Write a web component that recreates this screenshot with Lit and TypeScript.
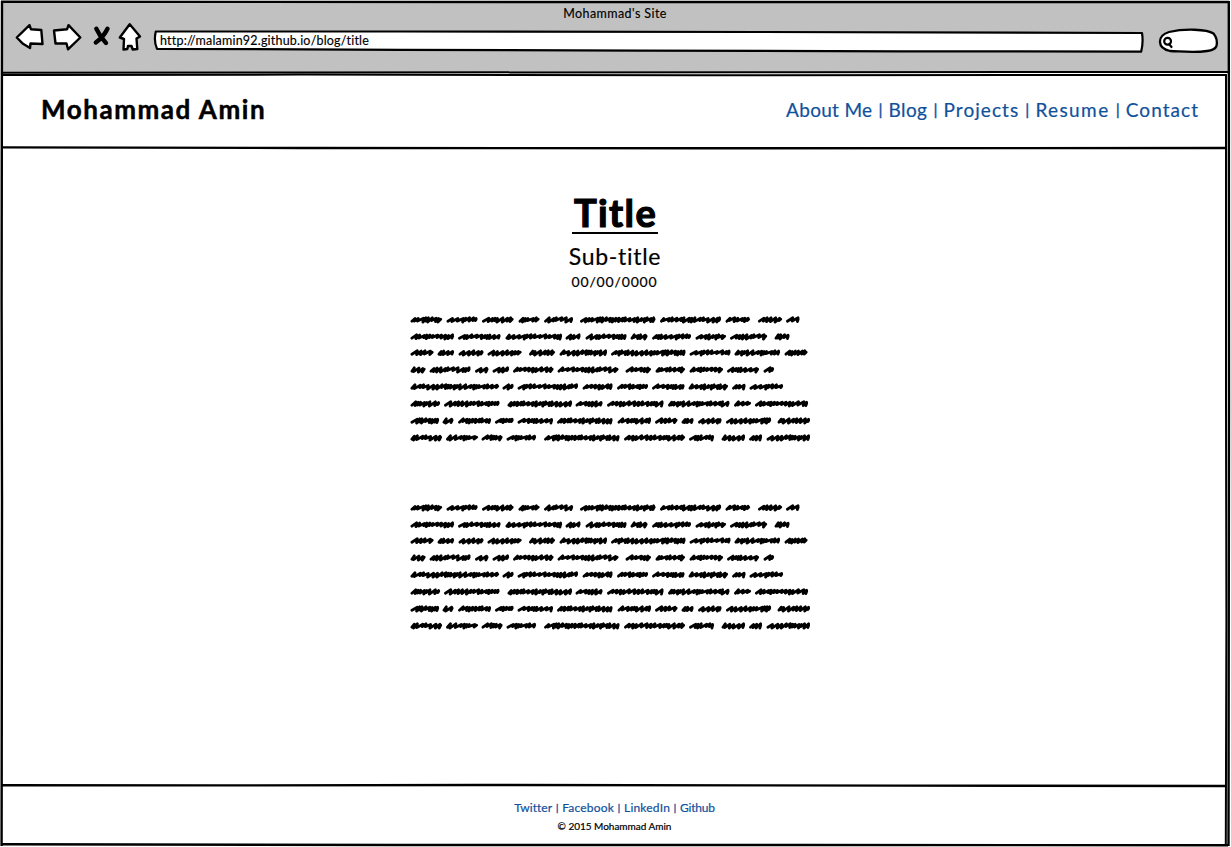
import { LitElement, html, css, svg } from "lit";
import { customElement, property } from "lit/decorators.js";

type Word = [number, number];

// Start and end of every scribbled word on each line, in pixels from the left edge.
const LINES: { y: number; words: Word[] }[] = [
  { y: 10, words: [[0.5, 32], [36.5, 67.5], [72, 103.5], [108.5, 129.5], [134, 163], [170, 245.5], [250, 311], [315.5, 340], [348, 372], [376, 389.5]] },
  { y: 27, words: [[0.5, 44], [48, 90.5], [95.5, 152], [155.5, 170.5], [175.5, 216.5], [220.5, 237.5], [242, 281], [285.5, 316], [320, 357], [364.5, 379.5]] },
  { y: 43, words: [[0.5, 23.5], [27.5, 44], [48.5, 73.5], [77.5, 111.5], [119, 145], [149.5, 197], [201, 275.5], [279.5, 320.5], [324.5, 370], [374.5, 397.5]] },
  { y: 60, words: [[0.5, 15.5], [19.5, 60.5], [65, 78.5], [82.5, 99], [103, 143.5], [147.5, 208.5], [215.5, 241], [245.5, 275], [279.5, 313], [317, 349], [353.5, 364]] },
  { y: 77, words: [[0.5, 89], [92.5, 103.5], [107.5, 168], [172.5, 202.5], [207, 238], [242, 274.5], [278.5, 318], [322, 335.5], [339.5, 373]] },
  { y: 94, words: [[0.5, 30], [34, 89.5], [97.5, 162], [165.5, 192.5], [197, 253.5], [258, 319.5], [324, 341], [345, 398]] },
  { y: 111, words: [[0.5, 29], [32.5, 43.5], [48, 81], [85, 103.5], [107.5, 143], [147, 202.5], [207.5, 241], [245, 267.5], [271.5, 283.5], [288, 311.5], [316, 361], [367.5, 400]] },
  { y: 128, words: [[0.5, 32], [36, 68], [71.5, 92.5], [96.5, 126], [134, 209.5], [214, 275], [279, 304], [311.5, 335], [339, 352], [356.5, 400]] },
];

// A pen stroke that rocks back and forth between two heights, with uneven steps.
function scribble(a: number, b: number, y: number, seed: number): string {
  let x = a + 1.4;
  let s = seed;
  let d = `M${x} ${y + 1.2}`;
  while (x < b - 3.5) {
    s = (s * 37 + 11) % 101;
    const step = 2.4 + (s % 5) * 0.75;
    const nx = Math.min(x + step, b - 1.4);
    const up = y - 1.5 - (s % 3) * 0.35;
    const down = y + 0.6 + (s % 4) * 0.5;
    d += `L${nx.toFixed(1)} ${up.toFixed(1)}L${(nx - 0.7).toFixed(1)} ${down.toFixed(1)}`;
    x = nx;
  }
  return d + `L${(b - 1.3).toFixed(1)} ${y - 0.8}`;
}

@customElement("scribble-block")
export class ScribbleBlock extends LitElement {
  static styles = css`
    :host { display: block; width: 402px; height: 140px; }
    svg { display: block; }
  `;
  render() {
    return html`<svg width="402" height="140" fill="none" stroke="#000" stroke-width="2.8" stroke-linecap="round" stroke-linejoin="round">
      ${LINES.map((line, i) => line.words.map(([a, b], j) => svg`<path d=${scribble(a, b, line.y, i * 13 + j * 7 + 3)} />`))}
    </svg>`;
  }
}

interface LinkItem { text: string; tracking: number; }

@customElement("link-row")
export class LinkRow extends LitElement {
  @property({ type: Array }) items: LinkItem[] = [];
  static styles = css`
    :host { display: flex; align-items: center; color: #10519c; white-space: pre; }
    .bar { width: var(--bar-gap); text-align: center; letter-spacing: 0; font-size: var(--bar-size); -webkit-text-stroke: 0.4px currentColor; }
    a { color: inherit; text-decoration: none; cursor: pointer; -webkit-text-stroke: 0.2px currentColor; }
  `;
  render() {
    return this.items.map((item, i) => html`${i ? html`<span class="bar">|</span>` : ""}<a style="letter-spacing:${item.tracking}px">${item.text}</a>`);
  }
}

const MENU: LinkItem[] = [
  { text: "About Me", tracking: 0.3 },
  { text: "Blog", tracking: 0.4 },
  { text: "Projects", tracking: 1.05 },
  { text: "Resume", tracking: 1.4 },
  { text: "Contact", tracking: 1.05 },
];

const SOCIAL: LinkItem[] = [
  { text: "Twitter", tracking: 0.05 },
  { text: "Facebook", tracking: 0.2 },
  { text: "LinkedIn", tracking: 0.2 },
  { text: "Github", tracking: -0.2 },
];

@customElement("app-root")
export class AppRoot extends LitElement {
  static styles = css`
    :host {
      display: grid;
      grid-template-rows: 74px 74px 1fr 61px;
      position: relative;
      width: 1231px;
      height: 847px;
      box-sizing: border-box;
      overflow: hidden;
      background: #fff;
      color: #000;
      font-family: "Lato", sans-serif;
      line-height: 1;
      white-space: nowrap;
    }
    .chrome { background: #c1c1c1; margin: 2px 3px 0 2px; display: flex; flex-direction: column; height: 70px; }
    .site { text-align: center; font-size: 12.5px; line-height: 14px; padding-top: 5px; letter-spacing: 0.42px; -webkit-text-stroke: 0.15px #000; }
    .tools { display: flex; align-items: flex-start; height: 36px; padding-left: 12px; }
    .icons { display: block; width: 132px; height: 34px; flex: none; }
    .address { display: flex; width: 1000px; height: 34px; flex: none; position: relative; }
    .address svg { position: absolute; inset: 0; }
    .url { position: relative; padding: 13px 0 0 14px; font-size: 12.5px; line-height: 14px; letter-spacing: 0.2px; -webkit-text-stroke: 0.15px #000; }
    .search { display: block; width: 70px; height: 34px; flex: none; margin-left: 7px; }
    .nav { display: flex; justify-content: space-between; align-items: center; padding: 0 32px 4px 41px; }
    .brand { font-size: 26px; font-weight: 700; letter-spacing: 1.55px; -webkit-text-stroke: 0.5px #000; }
    .menu { font-size: 19px; --bar-gap: 16.2px; --bar-size: 16px; }
    .main { display: flex; flex-direction: column; align-items: center; }
    .title { margin: 44px 1px 0 0; height: 40px; padding: 0 1px 0 2px; border-bottom: 2px solid #000; font-size: 38px; line-height: 40px; font-weight: 700; letter-spacing: 1.4px; -webkit-text-stroke: 1.2px #000; }
    .subtitle { margin: 9px 1px 0 0; font-size: 23px; line-height: 27px; letter-spacing: 0.7px; -webkit-text-stroke: 0.2px #000; }
    .date { margin: 3px 2px 0 0; font-size: 14px; line-height: 17px; letter-spacing: 0.85px; -webkit-text-stroke: 0.2px #000; }
    .para { margin: 20px 10px 0 0; }
    .para + .para { margin-top: 48px; }
    .footer { display: flex; flex-direction: column; align-items: center; padding: 15px 2px 0 0; }
    .social { font-size: 12px; line-height: 14px; --bar-gap: 10px; --bar-size: 9.5px; }
    .copy { font-size: 10px; line-height: 12px; margin-top: 5px; letter-spacing: -0.02px; -webkit-text-stroke: 0.2px #000; }
    .frame { position: absolute; inset: 0; pointer-events: none; }
  `;

  render() {
    return html`
      <header class="chrome">
        <div class="site">Mohammad's Site</div>
        <div class="tools">
          <svg class="icons" viewBox="14 21 132 34" fill="#fff" stroke="#000" stroke-width="2.4" stroke-linejoin="round" stroke-linecap="round">
            <path d="M16.8 37.5L29.5 25.2L31 29.3L41.3 30L42.5 44L30.5 43.5L30 48L23 43.8Z" />
            <path d="M54 30.5L67 29.3L68.5 25.2L80.3 37.5L68 49.3L66.5 43.5L55.5 43.5Z" />
            <path d="M129.7 24.2L140 36.5L136.5 38.5L137.3 49L132.7 49.5L131.5 46L128 46L127.3 49L123.5 49.5L124 39L119.8 37.5Z" />
            <path d="M96.3 28.7Q100 37 106 43M107.5 28.7Q103.5 37 95.8 42.5" stroke-width="4.4" fill="none" />
          </svg>
          <div class="address">
            <svg width="1000" height="34" viewBox="146 21 1000 34" fill="#fff" stroke="#000" stroke-width="2.2" stroke-linejoin="round">
              <path d="M155.8 31.5L400 31.5L760 32L1142 33Q1143.5 42 1141.2 51.6L900 51.3L640 50.6L400 49.8L157 48.8Q153.5 41 155.8 31.5Z" />
            </svg>
            <span class="url">http://malamin92.github.io/blog/title</span>
          </div>
          <svg class="search" viewBox="1153 21 70 34" fill="#fff" stroke="#000" stroke-width="2.3" stroke-linejoin="round" stroke-linecap="round">
            <path d="M1169 32C1184 28.5 1207 29 1213.5 33.5Q1218 39 1216.5 46Q1215 50 1207 51C1194 53 1183 51.5 1170 51C1157 48 1156.5 36 1169 32Z" />
            <path d="M1171 41.2a3.4 3.4 0 1 1-6.8 0a3.4 3.4 0 1 1 6.8 0ZM1169 44L1171.5 47" stroke-width="2.2" />
          </svg>
        </div>
      </header>
      <nav class="nav">
        <div class="brand">Mohammad Amin</div>
        <link-row class="menu" .items=${MENU}></link-row>
      </nav>
      <main class="main">
        <div class="title">Title</div>
        <div class="subtitle">Sub-title</div>
        <div class="date">00/00/0000</div>
        <scribble-block class="para"></scribble-block>
        <scribble-block class="para"></scribble-block>
      </main>
      <footer class="footer">
        <link-row class="social" .items=${SOCIAL}></link-row>
        <div class="copy">© 2015 Mohammad Amin</div>
      </footer>
      <svg class="frame" width="1231" height="847" fill="none" stroke="#000" stroke-width="2.4">
        <path d="M1 1.8L600 2L1229 2" />
        <path d="M2 1L1.6 300L2 500L1.6 846" />
        <path d="M1228.8 1L1229 400L1228.5 846" />
        <path d="M1226 74L1226 400L1226.4 620L1225.8 845" stroke-width="2" />
        <path d="M2 72.7L300 72.5L800 72.2L1228 72" stroke-width="2" />
        <path d="M2 75L300 74.6L700 75.2L1226 75" stroke-width="2" />
        <path d="M2 147.4L300 148L700 148.3L1226 148" />
        <path d="M2 785.2L220 785.4L480 785L900 785.6L1226 786" />
        <path d="M2 844.2L400 845L800 845L1228 845.2" />
      </svg>
    `;
  }
}
